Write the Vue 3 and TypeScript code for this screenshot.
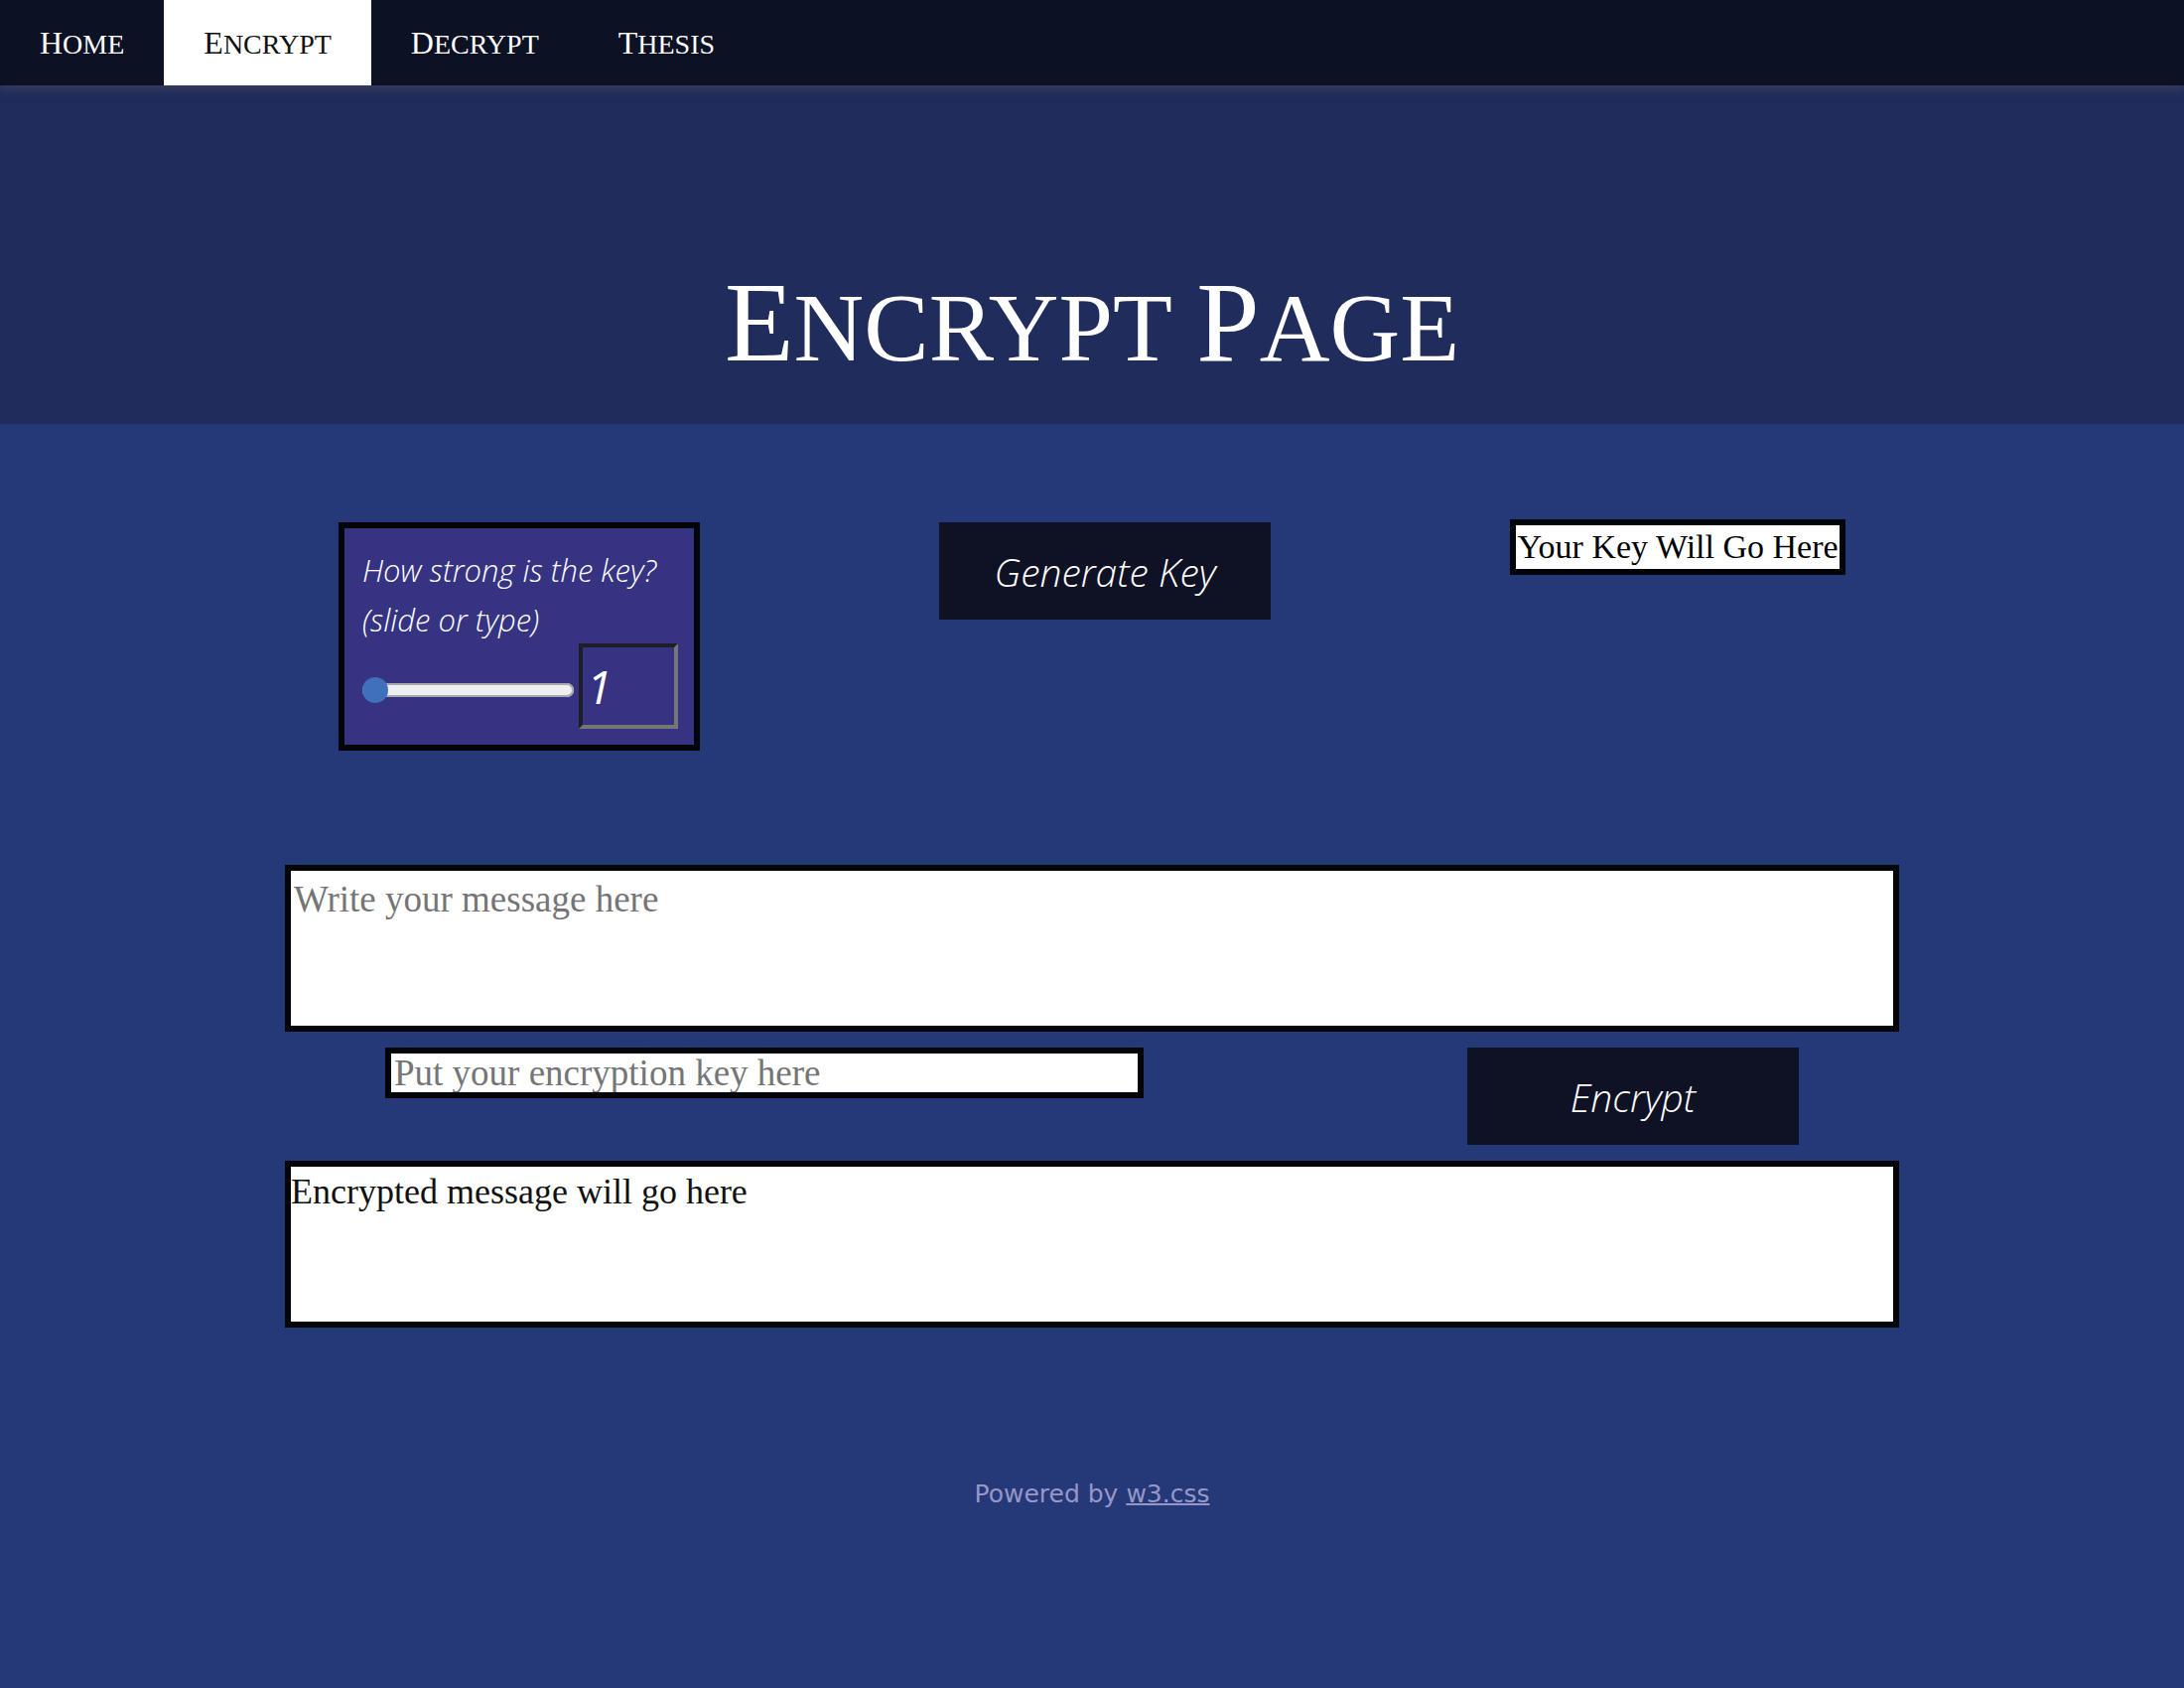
<script setup lang="ts">
import { ref } from 'vue'

interface NavLink {
  label: string
  href: string
  current?: boolean
}

const links: NavLink[] = [
  { label: 'Home', href: '#home' },
  { label: 'Encrypt', href: '#encrypt', current: true },
  { label: 'Decrypt', href: '#decrypt' },
  { label: 'Thesis', href: '#thesis' },
]

const titleWords = ['Encrypt', 'Page']
const strength = ref(1)
const generatedKey = ref('Your Key Will Go Here')
const message = ref('')
const key = ref('')
const encrypted = ref('Encrypted message will go here')
</script>

<template>
  <div class="page">
    <nav class="nav">
      <a
        v-for="link in links"
        :key="link.label"
        :href="link.href"
        :class="['nav-link', { current: link.current }]"
      >{{ link.label }}</a>
    </nav>

    <header class="hero">
      <h1 class="title">
        <template v-for="word in titleWords" :key="word"><span class="word">{{ word }}</span>{{ ' ' }}</template>
      </h1>
    </header>

    <main class="content">
      <section class="row key-row">
        <div class="strength control">
          <label for="strength-range">How strong is the key?<br>(slide or type)</label>
          <div class="strength-inputs">
            <input id="strength-range" v-model.number="strength" class="range" type="range" min="1" max="10">
            <input v-model.number="strength" class="number" type="text" inputmode="numeric" aria-label="Key strength">
          </div>
        </div>
        <button class="button control" type="button">Generate Key</button>
        <output class="key-output">{{ generatedKey }}</output>
      </section>

      <textarea v-model="message" class="box message" placeholder="Write your message here" aria-label="Message"></textarea>

      <section class="row encrypt-row">
        <input v-model="key" class="key-input" type="text" placeholder="Put your encryption key here" aria-label="Encryption key">
        <button class="button" type="button">Encrypt</button>
      </section>

      <output class="box result">{{ encrypted }}</output>
    </main>

    <footer class="footer">Powered by <a href="#w3css">w3.css</a></footer>
  </div>
</template>

<style>
html,
body {
  margin: 0;
  background: #253878;
}
</style>

<style scoped>
.page {
  min-height: 100vh;
  background: #253878;
  color: #fff;
}

.page *,
.page *::before {
  box-sizing: border-box;
}

.nav {
  position: relative;
  display: flex;
  height: 86px;
  background: #0c1124;
  box-shadow: 0 2px 12px rgba(104, 90, 96, 0.5);
}

.nav-link {
  padding: 0 40px;
  color: #fff;
  font-family: "Liberation Serif", serif;
  font-size: 28px;
  line-height: 86px;
  text-decoration: none;
  text-transform: uppercase;
}

.nav-link::first-letter {
  font-size: 32px;
}

.nav-link.current {
  background: #fff;
  color: #111;
}

.hero {
  height: 341px;
  padding-top: 169px;
  background: #1f2c5c;
  text-align: center;
}

.title {
  margin: 0;
  font-family: "Liberation Serif", serif;
  font-size: 98px;
  font-weight: 400;
  line-height: 140px;
  text-transform: uppercase;
}

.word {
  display: inline-block;
}

.word::first-letter {
  font-size: 114px;
}

.content {
  width: calc(74% - 2px);
  margin: 0 auto;
  padding-top: 96px;
}

.row {
  display: flex;
  align-items: flex-start;
  justify-content: space-between;
}

.key-row {
  padding: 0 54px;
}

.control {
  margin-top: 3px;
}

.strength {
  width: 364px;
  padding: 17px 16px 16px 18px;
  border: 6px solid #030509;
  background: #363382;
  font-family: "Open Sans", sans-serif;
  font-size: 31px;
  font-style: italic;
  font-weight: 300;
  line-height: 50px;
}

.strength label {
  display: block;
}

.strength-inputs {
  display: flex;
  align-items: center;
  justify-content: space-between;
  margin-top: -1px;
}

.range {
  width: 213px;
  height: 26px;
  margin: 8px 0 0;
  appearance: none;
  background: none;
}

.range::-webkit-slider-runnable-track {
  height: 14px;
  border-radius: 7px;
  background: #efefef;
  box-shadow: inset 0 0 0 2px #a9a9ad;
}

.range::-webkit-slider-thumb {
  width: 26px;
  height: 26px;
  margin-top: -6px;
  appearance: none;
  border-radius: 50%;
  background: #4070bc;
}

.number {
  width: 100px;
  height: 86px;
  padding: 0 4px;
  border: 4px solid;
  border-color: #1e1e28 #767676 #767676 #1e1e28;
  background: transparent;
  color: #fff;
  font: italic 400 46px "Open Sans", sans-serif;
}

.button {
  width: 334px;
  height: 98px;
  padding: 0;
  border: 0;
  background: #0f1224;
  color: #fff;
  font: italic 300 39px "Open Sans", sans-serif;
}

.key-output {
  min-width: 338px;
  border: 6px solid #030509;
  background: #fff;
  color: #000;
  font: 34px/44px "Liberation Serif", serif;
  text-align: center;
  white-space: nowrap;
}

.box {
  display: block;
  width: 100%;
  height: 168px;
  margin: 0;
  border: 6px solid #030509;
  background: #fff;
  color: #111;
  font: 36px/50px "Liberation Serif", serif;
}

.message {
  margin-top: 115px;
  padding: 4px 3px;
  font-size: 37px;
  resize: none;
}

.encrypt-row {
  padding: 16px 101px;
}

.key-input {
  width: 764px;
  height: 51px;
  padding: 0 3px;
  border: 6px solid #030509;
  background: #fff;
  color: #111;
  font: 37px "Liberation Serif", serif;
}

.message::placeholder,
.key-input::placeholder {
  color: #757575;
  opacity: 1;
}

.footer {
  padding: 144px 0 160px;
  color: #9697c8;
  font: 25px/48px "DejaVu Sans", sans-serif;
  text-align: center;
}

.footer a {
  color: inherit;
  text-decoration-thickness: 2px;
}
</style>
